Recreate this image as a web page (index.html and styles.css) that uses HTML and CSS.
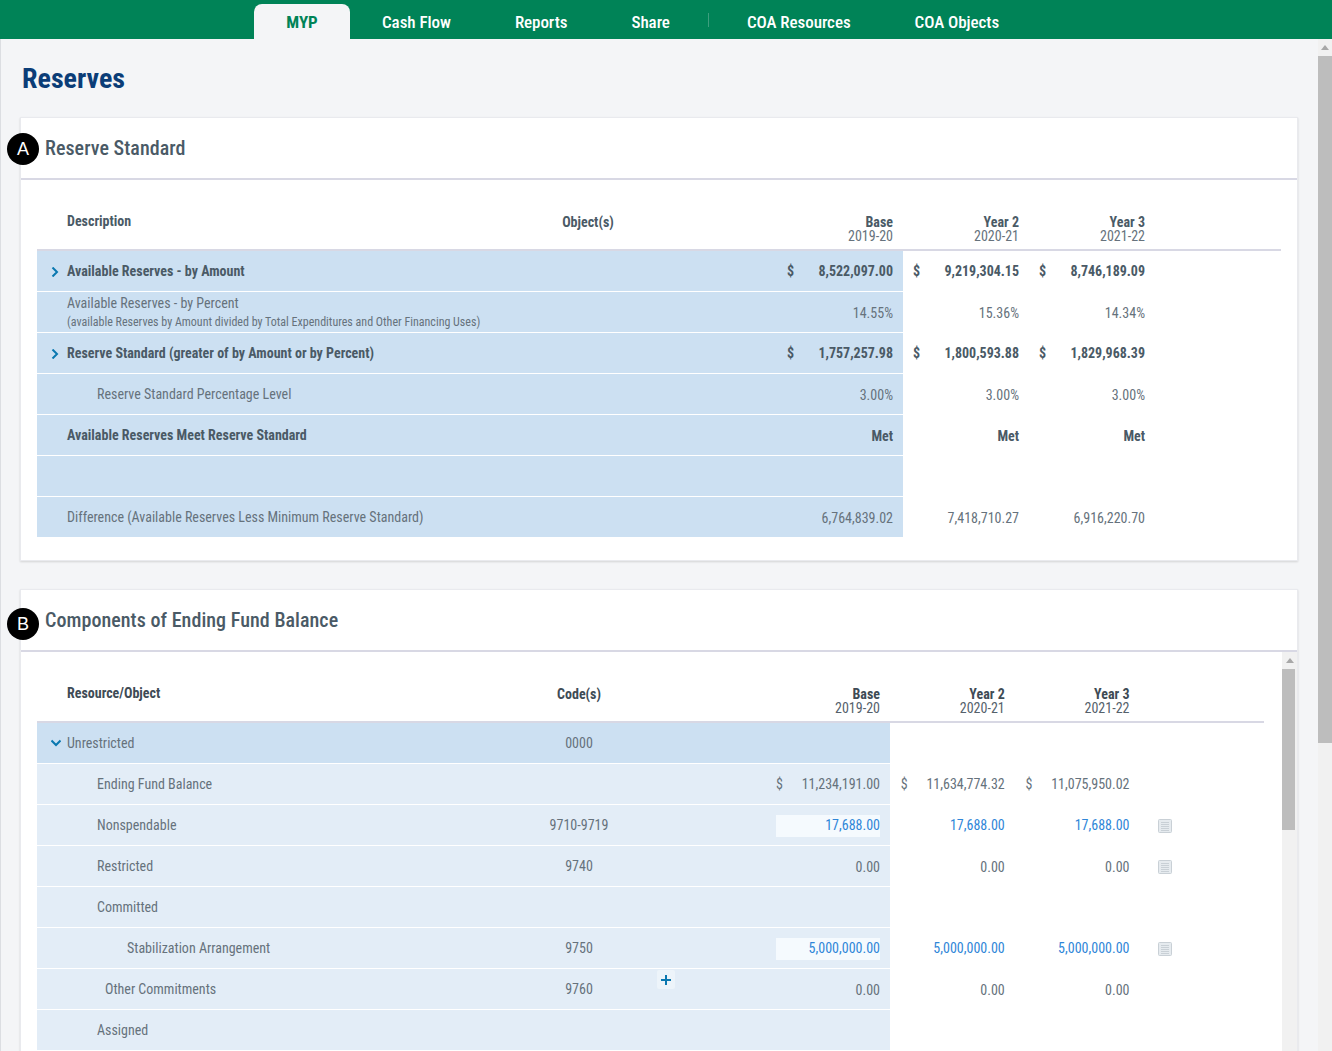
FILE: index.html
```html
<!DOCTYPE html>
<html lang="en">
<head>
    <meta charset="UTF-8">
    <meta name="viewport" content="width=device-width, initial-scale=1.0">
    <title>Reserves</title>
    <link rel="stylesheet" href="styles.css">
</head>
<body>
    <nav class="nav">
        <a class="nav-tab active">MYP</a>
        <a class="nav-tab">Cash Flow</a>
        <a class="nav-tab">Reports</a>
        <a class="nav-tab">Share</a>
        <span class="nav-sep"></span>
        <a class="nav-tab">COA Resources</a>
        <a class="nav-tab">COA Objects</a>
    </nav>

    <div class="layout">
        <main class="page">
            <h1 class="page-title">Reserves</h1>

            <!-- Reserve Standard -->
            <section class="card card-a">
                <span class="badge">A</span>
                <h2 class="card-title">Reserve Standard</h2>
                <div class="card-body">
                    <table class="grid">
                        <colgroup>
                            <col class="c-desc"><col class="c-code"><col class="c-base"><col class="c-year"><col class="c-year"><col>
                        </colgroup>
                        <thead>
                            <tr>
                                <th class="th-label">Description</th>
                                <th class="th-code">Object(s)</th>
                                <th class="num">Base<span>2019-20</span></th>
                                <th class="num">Year 2<span>2020-21</span></th>
                                <th class="num">Year 3<span>2021-22</span></th>
                                <th></th>
                            </tr>
                        </thead>
                        <tbody class="dark">
                            <tr class="bold">
                                <td class="label"><svg class="chev" viewBox="0 0 8 10"><path d="M1.5 .5l4.5 4.5-4.5 4.5"/></svg>Available Reserves - by Amount</td>
                                <td></td>
                                <td class="num"><div class="money"><i>$</i>8,522,097.00</div></td>
                                <td class="num"><div class="money"><i>$</i>9,219,304.15</div></td>
                                <td class="num"><div class="money"><i>$</i>8,746,189.09</div></td>
                                <td></td>
                            </tr>
                            <tr>
                                <td class="label two-line">Available Reserves - by Percent<small>(available Reserves by Amount divided by Total Expenditures and Other Financing Uses)</small></td>
                                <td></td>
                                <td class="num low">14.55%</td>
                                <td class="num low">15.36%</td>
                                <td class="num low">14.34%</td>
                                <td></td>
                            </tr>
                            <tr class="bold">
                                <td class="label"><svg class="chev" viewBox="0 0 8 10"><path d="M1.5 .5l4.5 4.5-4.5 4.5"/></svg>Reserve Standard (greater of by Amount or by Percent)</td>
                                <td></td>
                                <td class="num"><div class="money"><i>$</i>1,757,257.98</div></td>
                                <td class="num"><div class="money"><i>$</i>1,800,593.88</div></td>
                                <td class="num"><div class="money"><i>$</i>1,829,968.39</div></td>
                                <td></td>
                            </tr>
                            <tr>
                                <td class="label indent-1">Reserve Standard Percentage Level</td>
                                <td></td>
                                <td class="num low">3.00%</td>
                                <td class="num low">3.00%</td>
                                <td class="num low">3.00%</td>
                                <td></td>
                            </tr>
                            <tr class="bold">
                                <td class="label">Available Reserves Meet Reserve Standard</td>
                                <td></td>
                                <td class="num low">Met</td>
                                <td class="num low">Met</td>
                                <td class="num low">Met</td>
                                <td></td>
                            </tr>
                            <tr>
                                <td class="label"></td>
                                <td></td>
                                <td class="num"></td>
                                <td></td>
                                <td></td>
                                <td></td>
                            </tr>
                            <tr>
                                <td class="label">Difference (Available Reserves Less Minimum Reserve Standard)</td>
                                <td></td>
                                <td class="num low">6,764,839.02</td>
                                <td class="num low">7,418,710.27</td>
                                <td class="num low">6,916,220.70</td>
                                <td></td>
                            </tr>
                        </tbody>
                    </table>
                </div>
            </section>

            <!-- Components of Ending Fund Balance -->
            <section class="card card-b">
                <span class="badge">B</span>
                <h2 class="card-title">Components of Ending Fund Balance</h2>
                <div class="card-body scroll-body">
                    <table class="grid">
                        <colgroup>
                            <col class="c-desc"><col class="c-code"><col class="c-base"><col class="c-year"><col class="c-year"><col>
                        </colgroup>
                        <thead>
                            <tr>
                                <th class="th-label">Resource/Object</th>
                                <th class="th-code">Code(s)</th>
                                <th class="num">Base<span>2019-20</span></th>
                                <th class="num">Year 2<span>2020-21</span></th>
                                <th class="num">Year 3<span>2021-22</span></th>
                                <th></th>
                            </tr>
                        </thead>
                        <tbody class="light">
                            <tr class="group">
                                <td class="label"><svg class="chev" viewBox="0 0 10 8"><path d="M.5 1.5l4.5 4.5 4.5-4.5"/></svg>Unrestricted</td>
                                <td class="code">0000</td>
                                <td></td>
                                <td></td>
                                <td></td>
                                <td></td>
                            </tr>
                            <tr>
                                <td class="label indent-1">Ending Fund Balance</td>
                                <td></td>
                                <td class="num"><div class="money"><i>$</i>11,234,191.00</div></td>
                                <td class="num"><div class="money"><i>$</i>11,634,774.32</div></td>
                                <td class="num"><div class="money"><i>$</i>11,075,950.02</div></td>
                                <td></td>
                            </tr>
                            <tr>
                                <td class="label indent-1">Nonspendable</td>
                                <td class="code">9710-9719</td>
                                <td class="num"><div class="entry link">17,688.00</div></td>
                                <td class="num link">17,688.00</td>
                                <td class="num link">17,688.00</td>
                                <td class="note"><svg class="doc" viewBox="0 0 14 14"><rect x=".5" y=".5" width="13" height="13" rx="1"/><path d="M3 3.5h8M3 5.5h8M3 7.5h8M3 9.5h8M3 11.5h8"/></svg></td>
                            </tr>
                            <tr>
                                <td class="label indent-1">Restricted</td>
                                <td class="code">9740</td>
                                <td class="num low">0.00</td>
                                <td class="num low">0.00</td>
                                <td class="num low">0.00</td>
                                <td class="note"><svg class="doc" viewBox="0 0 14 14"><rect x=".5" y=".5" width="13" height="13" rx="1"/><path d="M3 3.5h8M3 5.5h8M3 7.5h8M3 9.5h8M3 11.5h8"/></svg></td>
                            </tr>
                            <tr>
                                <td class="label indent-1">Committed</td>
                                <td></td>
                                <td></td>
                                <td></td>
                                <td></td>
                                <td></td>
                            </tr>
                            <tr>
                                <td class="label indent-2">Stabilization Arrangement</td>
                                <td class="code">9750</td>
                                <td class="num"><div class="entry link">5,000,000.00</div></td>
                                <td class="num link">5,000,000.00</td>
                                <td class="num link">5,000,000.00</td>
                                <td class="note"><svg class="doc" viewBox="0 0 14 14"><rect x=".5" y=".5" width="13" height="13" rx="1"/><path d="M3 3.5h8M3 5.5h8M3 7.5h8M3 9.5h8M3 11.5h8"/></svg></td>
                            </tr>
                            <tr>
                                <td class="label indent-other">Other Commitments</td>
                                <td class="code">9760</td>
                                <td class="num low has-add">
                                    <button class="add"><svg viewBox="0 0 10 10"><path d="M5 0v10M0 5h10"/></svg></button>
                                    0.00
                                </td>
                                <td class="num low">0.00</td>
                                <td class="num low">0.00</td>
                                <td></td>
                            </tr>
                            <tr>
                                <td class="label indent-1">Assigned</td>
                                <td></td>
                                <td></td>
                                <td></td>
                                <td></td>
                                <td></td>
                            </tr>
                        </tbody>
                    </table>
                    <div class="scrollbar inner-bar">
                        <span class="arrow"></span>
                        <div class="thumb"></div>
                    </div>
                </div>
            </section>
        </main>

        <div class="scrollbar page-bar">
            <span class="arrow"></span>
            <div class="thumb"></div>
        </div>
    </div>
</body>
</html>
```

FILE: styles.css
```css
* {
    box-sizing: border-box;
}

html, body {
    height: 100%;
}

body {
    margin: 0;
    overflow: hidden;
    display: flex;
    flex-direction: column;
    background-color: #f4f5f7;
    font-family: Roboto, "Liberation Sans", sans-serif;
    font-size: 14px;
    font-stretch: 85%;
    color: #66727c;
}

/* top navigation */
.nav {
    flex: none;
    height: 39px;
    display: flex;
    align-items: flex-end;
    padding-left: 254px;
    background-color: #008357;
}

.nav-tab {
    height: 35px;
    padding: 0 32px;
    display: flex;
    align-items: center;
    font-size: 17px;
    font-weight: 500;
    letter-spacing: -0.05px;
    color: #fff;
}

.nav-tab.active {
    width: 96px;
    justify-content: center;
    padding: 0;
    background-color: #f4f5f7;
    border-radius: 8px 8px 0 0;
    font-weight: 700;
    color: #008357;
}

.nav-sep {
    width: 1px;
    height: 14px;
    margin: 0 6px 12px;
    background-color: #3d9f7e;
}

.layout {
    flex: 1;
    min-height: 0;
    display: flex;
}

.page {
    flex: 1;
    min-width: 0;
    overflow: hidden;
    padding: 0 20px 0 19px;
    border-left: 1px solid #dcdee2;
}

.page-title {
    margin: 0;
    padding: 22px 0 0 2px;
    height: 78px;
    font-size: 28px;
    line-height: 36px;
    font-weight: 700;
    color: #0b3d77;
}

/* cards */
.card {
    position: relative;
    background-color: #fff;
    border: 1px solid #e9eaee;
    box-shadow: 0 1px 2px rgba(0, 0, 0, 0.14);
}

.card-a {
    margin-bottom: 28px;
    padding-bottom: 22px;
}

.badge {
    position: absolute;
    left: -14px;
    top: 15px;
    width: 32px;
    height: 32px;
    border-radius: 50%;
    display: flex;
    align-items: center;
    justify-content: center;
    background-color: #000;
    color: #fff;
    font-family: "Liberation Sans", sans-serif;
    font-stretch: normal;
    font-size: 18px;
}

.card-b .badge {
    top: 18px;
}

.card-title {
    margin: 0;
    height: 62px;
    padding-left: 24px;
    border-bottom: 2px solid #d8d8e4;
    font-size: 20px;
    letter-spacing: 0.05px;
    line-height: 60px;
    font-weight: 500;
    color: #4a5a66;
}

.card-body {
    padding: 0 16px 0 16px;
}

.scroll-body {
    display: flex;
    align-items: flex-start;
    padding-right: 0;
}

/* tables */
.grid {
    width: 100%;
    table-layout: fixed;
    border-collapse: separate;
    border-spacing: 0;
}

.scroll-body .grid {
    width: 1227px;
    margin-right: 18px;
    flex: none;
}

.card-a .c-desc { width: 493px; }
.card-a .c-code { width: 116px; }
.card-a .c-base { width: 257px; }
.card-a .c-year { width: 126px; }

.card-b .c-desc { width: 475px; }
.card-b .c-code { width: 134px; }
.card-b .c-base { width: 244px; }
.card-b .c-year { width: 124.75px; }

.grid th {
    height: 71px;
    padding: 0 10px 6px;
    vertical-align: bottom;
    border-bottom: 2px solid #d8d8e4;
    font-weight: 700;
    font-size: 14px;
    line-height: 14px;
    color: #4a5a66;
}

.grid th span {
    display: block;
    font-weight: 400;
    color: #66727c;
}

.card-b .grid th {
    color: #3e4b55;
}

.card-b .grid th span {
    color: #55616b;
}

.grid th.th-label {
    padding: 0 0 21px 30px;
    text-align: left;
}

.grid th.th-code {
    padding-bottom: 20px;
    text-align: center;
}

.grid td {
    height: 41px;
    padding: 0;
    border-bottom: 1px solid #fff;
    vertical-align: middle;
    white-space: nowrap;
}

.grid td:nth-child(n+4) {
    border-bottom-color: transparent;
}

.dark td:nth-child(-n+3) { background-color: #cce0f2; }
.light td:nth-child(-n+3) { background-color: #e3edf7; }
.light .group td:nth-child(-n+3) { background-color: #cce0f2; }

.label {
    padding-left: 30px !important;
}

.label:has(.chev) {
    padding-left: 14px !important;
}

.indent-1 { padding-left: 60px !important; }
.indent-2 { padding-left: 90px !important; }
.indent-other { padding-left: 68px !important; }

.two-line {
    line-height: 18px;
}

.two-line small {
    display: block;
    margin-top: 1px;
    font-size: 12px;
    line-height: 18px;
}

.chev {
    width: 8px;
    height: 10px;
    margin: 0 8px 0 0;
    vertical-align: -1px;
    fill: none;
    stroke: #0a78b0;
    stroke-width: 2;
}

.group .chev {
    width: 10px;
    height: 8px;
    margin-right: 6px;
    vertical-align: 1px;
}

.bold td {
    font-weight: 700;
    color: #4a5a66;
}

.num {
    text-align: right;
    padding-right: 10px !important;
}

.num.low {
    padding-top: 2px !important;
}

.code {
    text-align: center;
}

.money {
    margin-left: auto;
    width: 106px;
    display: flex;
    justify-content: space-between;
}

.card-b .money {
    width: 104px;
}

.money i {
    font-style: normal;
}

.link {
    color: #2f86d8;
}

.entry {
    margin: 2px 0 0 auto;
    width: 104px;
    height: 22px;
    line-height: 20px;
    background-color: #f5fafe;
}

.note {
    padding: 2px 0 0 18px !important;
}

.doc {
    display: block;
    width: 14px;
    height: 14px;
    fill: #e6ebef;
    stroke: #c9d0d6;
    stroke-width: 1;
}

.has-add {
    position: relative;
}

.add {
    position: absolute;
    left: 11px;
    top: 1px;
    width: 18px;
    height: 19px;
    padding: 4px;
    border: none;
    border-radius: 2px;
    background-color: #edf4fa;
}

.add svg {
    display: block;
    width: 10px;
    height: 10px;
    fill: none;
    stroke: #0a78b0;
    stroke-width: 2;
}

/* scrollbars */
.scrollbar {
    flex: none;
    background-color: #f1f1f1;
}

.arrow {
    display: block;
    width: 0;
    height: 0;
    margin: 6px auto 6px;
    border-left: 4px solid transparent;
    border-right: 4px solid transparent;
    border-bottom: 5px solid #a8a8a8;
}

.thumb {
    background-color: #bdbdbd;
}

.page-bar {
    width: 14px;
}

.page-bar .thumb {
    height: 687px;
}

.inner-bar {
    width: 15px;
    height: 400px;
}

.inner-bar .thumb {
    height: 161px;
    margin-right: 2px;
}
```
